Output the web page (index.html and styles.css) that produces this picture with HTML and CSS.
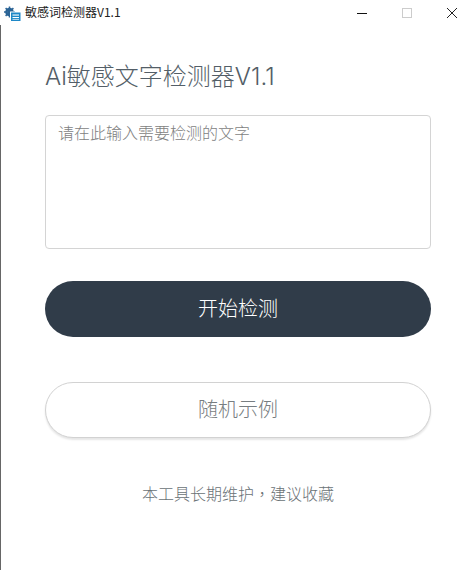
FILE: index.html
```html
<!DOCTYPE html>
<html lang="zh-CN">
<head>
<meta charset="utf-8">
<title>敏感词检测器V1.1</title>
<link rel="stylesheet" href="styles.css">
</head>
<body>
<div class="window">
  <header class="titlebar">
    <svg class="app-icon" width="18" height="18" viewBox="0 0 18 18" aria-hidden="true">
      <circle cx="6.500" cy="8" r="3.200" fill="none" stroke="#2b6496" stroke-width="2.200"/>
      <path d="M6.500 2.500V13.500M1 8H12M2.600 4.100L10.400 11.900M10.400 4.100L2.600 11.900" stroke="#2b6496" stroke-width="1.500"/>
      <rect x="7" y="7.500" width="11" height="10" fill="#fff"/>
      <rect x="8" y="8.500" width="9.500" height="8.500" fill="#1e88c7"/>
      <rect x="9.500" y="10.500" width="6.500" height="1.100" fill="#fff"/>
      <rect x="9.500" y="13" width="6.500" height="1.100" fill="#fff"/>
      <rect x="9.500" y="15" width="6.500" height="0.800" fill="#cfe6f5"/>
    </svg>
    <span class="app-title">敏感词检测器V1.1</span>
    <div class="controls">
      <svg class="ctl" width="12" height="12" viewBox="0 0 12 12" aria-hidden="true"><path d="M1 6.500H11" stroke="#111" stroke-width="1"/></svg>
      <svg class="ctl" width="12" height="12" viewBox="0 0 12 12" aria-hidden="true"><rect x="1.500" y="1.500" width="9" height="9" fill="none" stroke="#ccc" stroke-width="1"/></svg>
      <svg class="ctl" width="12" height="12" viewBox="0 0 12 12" aria-hidden="true"><path d="M1 1L11 11M11 1L1 11" stroke="#222" stroke-width="1"/></svg>
    </div>
  </header>
  <main class="content">
    <h1 class="heading">Ai敏感文字检测器V1.1</h1>
    <textarea class="input" placeholder="请在此输入需要检测的文字"></textarea>
    <button class="btn btn-primary" type="button">开始检测</button>
    <button class="btn btn-secondary" type="button">随机示例</button>
    <p class="note">本工具长期维护<span class="comma" lang="zh-TW">，</span>建议收藏</p>
  </main>
</div>
</body>
</html>
```
FILE: styles.css
```css
* { box-sizing: border-box; }
html, body { margin: 0; padding: 0; background: #fff; }
body {
  font-family: "Inter", "Noto Sans CJK SC", sans-serif;
  width: 474px;
  height: 570px;
  overflow: hidden;
}
.window {
  width: 474px;
  height: 570px;
  border-left: 1px solid #666;
  display: flex;
  flex-direction: column;
}
.titlebar {
  height: 25px;
  flex: none;
  display: flex;
  align-items: center;
  padding: 0 0 0 3px;
  margin-left: -1px;
  background: #fff;
}
.app-icon { flex: none; }
.app-title {
  margin-left: 4px;
  padding-bottom: 3px;
  font-size: 12px;
  color: #222;
  font-family: "Noto Sans CJK SC", sans-serif;
}
.controls {
  margin-left: auto;
  margin-right: 16px;
  display: flex;
  gap: 33px;
}
.content {
  padding: 0 0 0 44px;
  display: flex;
  flex-direction: column;
  align-items: flex-start;
}
.heading {
  margin: 36px 0 0;
  font-size: 24px;
  line-height: 32px;
  font-weight: 300;
  color: #535e67;
  font-family: "Inter", "Noto Sans CJK SC", sans-serif;
}
.input {
  display: block;
  margin-top: 22px;
  width: 386px;
  height: 134px;
  resize: none;
  padding: 5px 12px;
  border: 1px solid #d4d4d4;
  border-radius: 4px;
  outline: none;
  font-family: "Noto Sans CJK SC", sans-serif;
  font-size: 16px;
  font-weight: 300;
  line-height: 22px;
}
.input::placeholder { color: #7e7e7e; opacity: 1; }
.btn {
  display: block;
  width: 386px;
  height: 56px;
  border-radius: 28px;
  font-family: "Noto Sans CJK SC", sans-serif;
  font-size: 20px;
  font-weight: 300;
  padding: 0 0 4px;
}
.btn-primary {
  margin-top: 32px;
  background: #303c49;
  color: #fff;
  border: none;
}
.btn-secondary {
  margin-top: 45px;
  background: #fff;
  color: #777d81;
  border: 1px solid #d2d2d2;
  box-shadow: 0 2px 2px rgba(0, 0, 0, 0.1);
}
.note {
  margin: 44px 0 0;
  width: 386px;
  text-align: center;
  font-size: 16px;
  font-weight: 300;
  line-height: 22px;
  color: #6a7276;
  font-family: "Noto Sans CJK SC", sans-serif;
}
.comma {
  font-family: "Noto Sans CJK TC", sans-serif;
}
```
